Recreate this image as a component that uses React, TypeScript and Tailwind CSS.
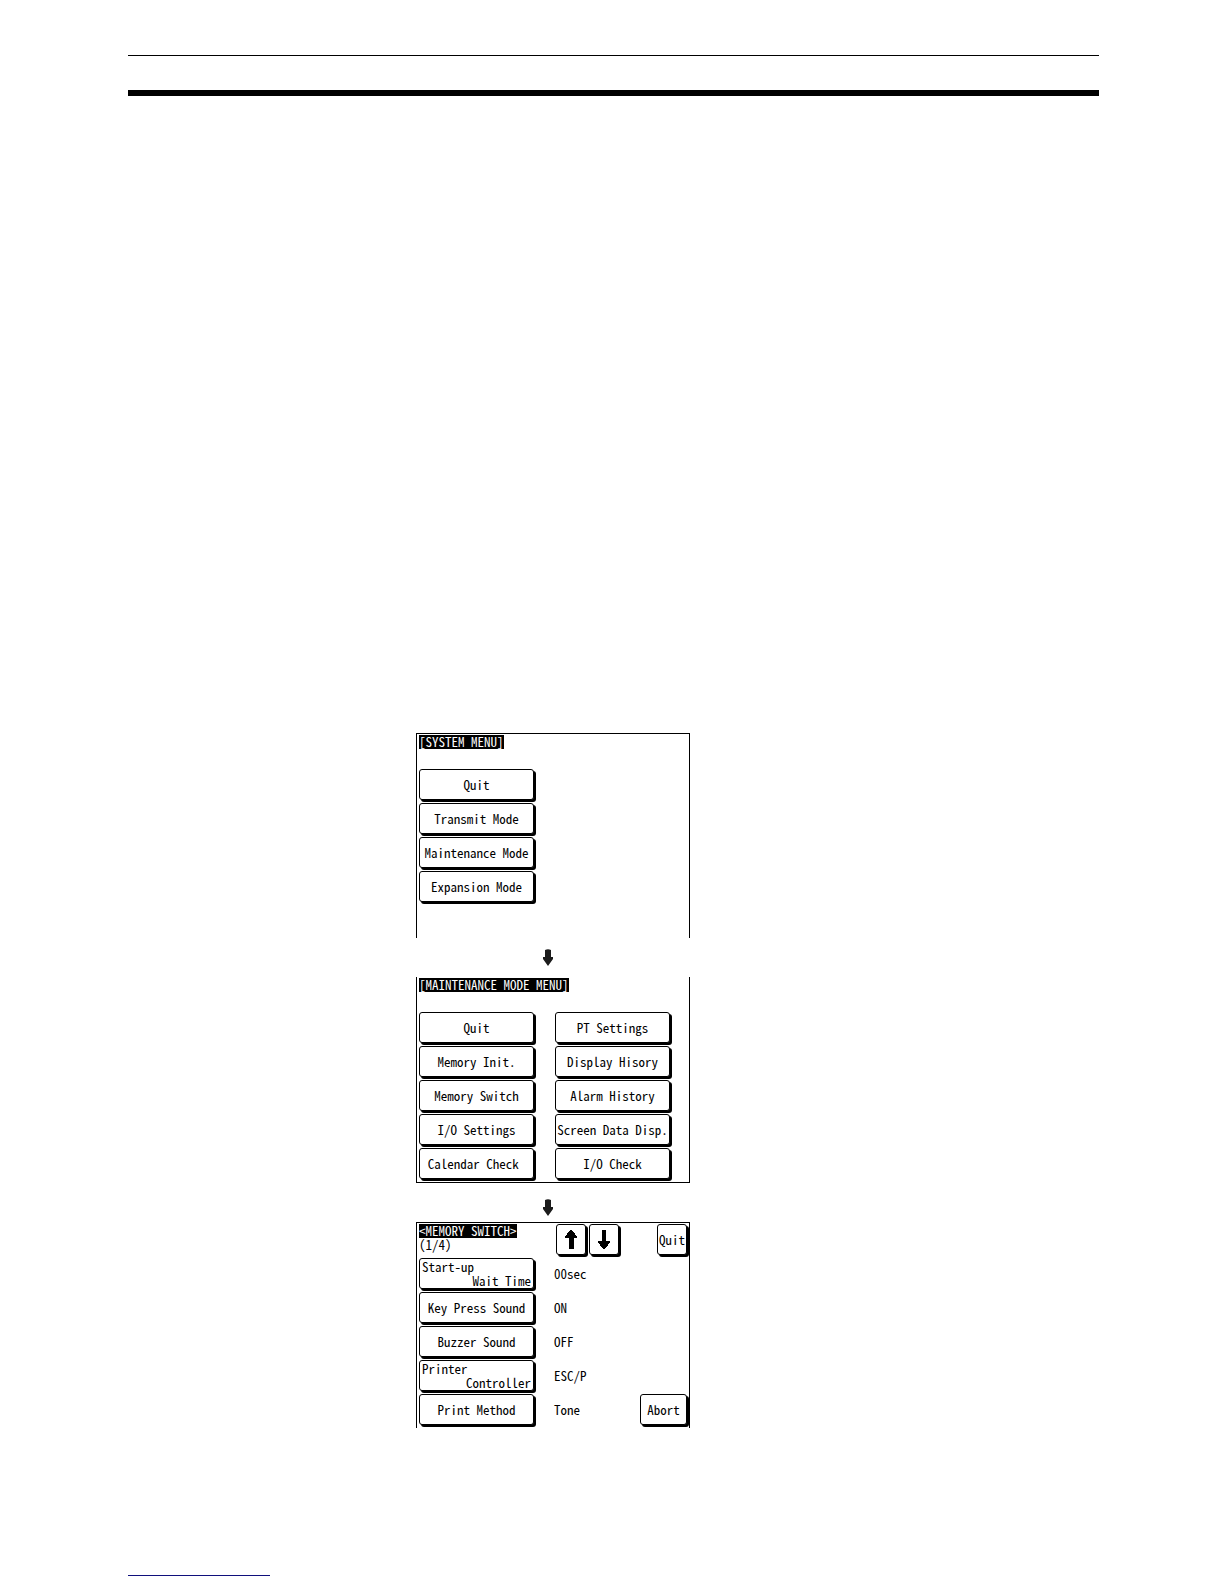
import type { ReactNode } from "react";

const systemMenu = ["Quit", "Transmit Mode", "Maintenance Mode", "Expansion Mode"];

const maintenanceLeft = [
  "Quit",
  "Memory Init.",
  "Memory Switch",
  "I/O Settings",
  "Calendar Check\u00a0",
];

const maintenanceRight = [
  "PT Settings",
  "Display Hisory",
  "Alarm History",
  "Screen Data Disp.",
  "I/O Check",
];

const switches = [
  { label: ["Start-up", "Wait Time"], value: "00sec" },
  { label: ["Key Press Sound"], value: "ON" },
  { label: ["Buzzer Sound"], value: "OFF" },
  { label: ["Printer", "Controller"], value: "ESC/P" },
  { label: ["Print Method"], value: "Tone" },
];

function Key({
  children,
  width = "w-[115px]",
  label,
}: {
  children: ReactNode;
  width?: string;
  label?: string;
}) {
  return (
    <button
      type="button"
      aria-label={label}
      className={`${width} h-[31px] shrink-0 flex items-center justify-center rounded-[3px] border border-black bg-white whitespace-nowrap shadow-[2px_2px_0_0_#000]`}
    >
      {children}
    </button>
  );
}

function Title({ children }: { children: ReactNode }) {
  return (
    <h2 className="w-fit h-[14px] bg-black text-white whitespace-nowrap">
      {children}
    </h2>
  );
}

function KeyColumn({ items }: { items: string[] }) {
  return (
    <div className="flex flex-col gap-[3px]">
      {items.map((item) => (
        <Key key={item}>{item}</Key>
      ))}
    </div>
  );
}

function NextArrow() {
  return (
    <svg width="10" height="17" viewBox="0 0 10 17" className="ml-[127px]" aria-hidden="true">
      <path d="M2 1 Q5 -0.5 8 1 V8 H10 V10 L5 17 L0 10 V8 H2 Z" fill="#1c1c1c" />
    </svg>
  );
}

function ScrollArrow({ down = false }: { down?: boolean }) {
  return (
    <svg width="12" height="19" viewBox="0 0 12 19" aria-hidden="true">
      {down ? (
        <path d="M4 0 H8 V11 H12 V13 H11 V14 H10 V16 H9 V17 H8 V18 H7 V19 H5 V18 H4 V17 H3 V16 H2 V14 H1 V13 H0 V11 H4 Z" />
      ) : (
        <path d="M5 0 H7 V1 H8 V2 H9 V3 H10 V5 H11 V6 H12 V8 H9 V19 H4 V8 H0 V6 H1 V5 H2 V3 H3 V2 H4 V1 H5 Z" />
      )}
    </svg>
  );
}

export default function App() {
  return (
    <div className="min-h-screen flex flex-col bg-white text-black pl-32 pr-[125px] pt-[55px] pb-2">
      <header>
        <hr className="border-0 h-px bg-black" />
        <hr className="border-0 h-[6px] bg-black mt-[34px]" />
      </header>

      <main className="mt-[637px] ml-72 w-[274px] font-['Noto_Sans_Mono_CJK_JP','DejaVu_Sans_Mono',monospace] font-light slashed-zero text-[13px] leading-[14px]">
        <section className="h-[205px] border-x border-t border-black pl-[2px] pt-px">
          <Title>[SYSTEM MENU]</Title>
          <div className="mt-5">
            <KeyColumn items={systemMenu} />
          </div>
        </section>

        <div className="py-[11px]">
          <NextArrow />
        </div>

        <section className="border-x border-b border-black pl-[2px] pt-px pb-[3px]">
          <Title>[MAINTENANCE MODE MENU]</Title>
          <div className="mt-5 flex gap-[21px]">
            <KeyColumn items={maintenanceLeft} />
            <KeyColumn items={maintenanceRight} />
          </div>
        </section>

        <div className="pt-4 pb-[6px]">
          <NextArrow />
        </div>

        <section className="border-x border-t border-black px-[2px] pt-px pb-[3px]">
          <div className="flex">
            <div className="w-[137px] shrink-0">
              <Title>&lt;MEMORY SWITCH&gt;</Title>
              <p>(1/4)</p>
            </div>
            <div className="flex gap-[3px]">
              <Key width="w-[30px]" label="Previous page">
                <ScrollArrow />
              </Key>
              <Key width="w-[30px]" label="Next page">
                <ScrollArrow down />
              </Key>
            </div>
            <div className="ml-auto">
              <Key width="w-[30px]">Quit</Key>
            </div>
          </div>

          <div className="mt-[3px] flex flex-col gap-[3px]">
            {switches.map(({ label, value }, i) => (
              <div key={value} className="flex items-center">
                <Key>
                  {label.length > 1 ? (
                    <span className="w-full px-[2px]">
                      <span className="block text-left">{label[0]}</span>
                      <span className="block text-right">{label[1]}</span>
                    </span>
                  ) : (
                    label[0]
                  )}
                </Key>
                <span className="ml-5">{value}</span>
                {i === switches.length - 1 && (
                  <div className="ml-auto">
                    <Key width="w-[47px]">Abort</Key>
                  </div>
                )}
              </div>
            ))}
          </div>
        </section>
      </main>

      <footer className="mt-auto">
        <hr className="border-0 h-px w-[142px] bg-[#10107c]" />
      </footer>
    </div>
  );
}
